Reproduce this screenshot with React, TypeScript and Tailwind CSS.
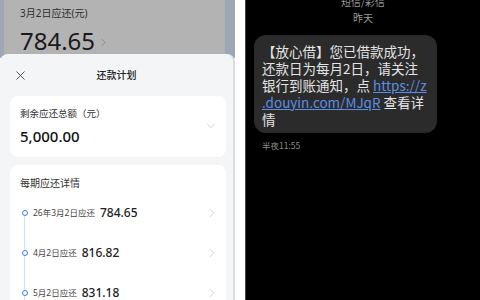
import React from 'react';
import { X, ChevronRight, ChevronDown } from 'lucide-react';

const FONT = { fontFamily: '"Noto Sans", "Noto Sans CJK SC", sans-serif' };

const rows = [
  { label: '26年3月2日应还', amount: '784.65' },
  { label: '4月2日应还', amount: '816.82' },
  { label: '5月2日应还', amount: '831.18' },
];

export default function App() {
  return (
    <div className="w-[480px] h-[300px] flex bg-white overflow-hidden" style={FONT}>
      {/* left: repayment plan sheet */}
      <div className="w-[235px] h-full flex flex-col overflow-hidden">
        <div className="h-[58px] shrink-0 flex bg-[#9fa7b4]">
          <div className="ml-[4px] mr-[10px] flex-1 bg-[#b3b3b3] pl-[16px] pt-[6px]">
            <div className="text-[10px] leading-[14px] text-[#2e2e2e]">3月2日应还(元)</div>
            <div className="mt-[7px] flex items-center gap-[2px]">
              <span className="text-[24px] leading-[28px] text-[#1a1a1a]">784.65</span>
              <ChevronRight size={13} strokeWidth={1.2} className="text-[#7a7a7a] mt-[2px]" />
            </div>
          </div>
        </div>

        <div className="relative -mt-[4px] flex-1 bg-[#f4f5f7] rounded-t-[8px] border-r-2 border-[#dadce0]">
          <div className="h-[42px] flex items-center relative">
            <X size={15} strokeWidth={1.3} className="ml-[13px] text-[#333]" />
            <div className="absolute inset-0 flex items-center justify-center text-[10px] font-medium text-[#222]">
              还款计划
            </div>
          </div>

          <div className="mx-[10px] w-[216px] bg-white rounded-[8px] flex items-center justify-between pl-[10px] pr-[8px] pt-[11px] pb-[11px]">
            <div>
              <div className="text-[9.5px] leading-[14px] text-[#333]">剩余应还总额（元）</div>
              <div className="mt-[5px] text-[15px] leading-[20px] font-medium text-[#111]">5,000.00</div>
            </div>
            <ChevronDown size={14} strokeWidth={1.2} className="text-[#c4c4c4] -mt-[2px]" />
          </div>

          <div className="mt-[8px] mx-[10px] w-[216px] bg-white rounded-[8px] pl-[10px] pr-[7px] pt-[11px]">
            <div className="text-[10px] leading-[14px] text-[#333]">每期应还详情</div>
            <div className="mt-[3px]">
              {rows.map((r, i) => (
                <div key={i} className="h-[40px] flex items-center">
                  <div className="w-[7px] self-stretch flex flex-col items-center ml-[1px]">
                    <div className={`flex-1 w-px ${i === 0 ? 'bg-transparent' : 'bg-[#cfe0fb]'}`} />
                    <div className="w-[6px] h-[6px] rounded-full border-[1.5px] border-[#3b7cf4] bg-white" />
                    <div className="flex-1 w-px bg-[#cfe0fb]" />
                  </div>
                  <span className="ml-[5px] text-[8.5px] text-[#444]">{r.label}</span>
                  <span className="ml-[5px] text-[12px] font-medium text-[#222]">{r.amount}</span>
                  <ChevronRight size={14} strokeWidth={1.2} className="ml-auto text-[#bdbdbd]" />
                </div>
              ))}
            </div>
          </div>
        </div>
      </div>

      {/* gap */}
      <div className="w-[10px] bg-white" />

      {/* right: sms */}
      <div className="flex-1 bg-black border-l border-[#444] flex flex-col font-['Noto_Sans_CJK_SC',sans-serif]">
        <div className="-mt-[5px] text-center text-[10px] leading-[14px] text-[#9a9a9a]">短信/彩信</div>
        <div className="mt-[2px] text-center text-[10px] leading-[14px] text-[#9a9a9a]">昨天</div>
        <div className="mt-[10px] ml-[8px] w-[183px] rounded-[12px] bg-[#2b2b2b] pl-[8px] pr-[6px] pt-[8px] pb-[5px] text-[13.5px] leading-[17px] text-[#e4e4e4]">
          【放心借】您已借款成功，<br />
          还款日为每月2日，请关注<br />
          银行到账通知，点 <span className="text-[#5b8ee6] underline">https://z<br />.douyin.com/MJqR</span> 查看详<br />
          情
        </div>
        <div className="mt-[6px] ml-[16px] text-[8.5px] leading-[12px] text-[#8a8a8a]">半夜11:55</div>
      </div>
    </div>
  );
}
